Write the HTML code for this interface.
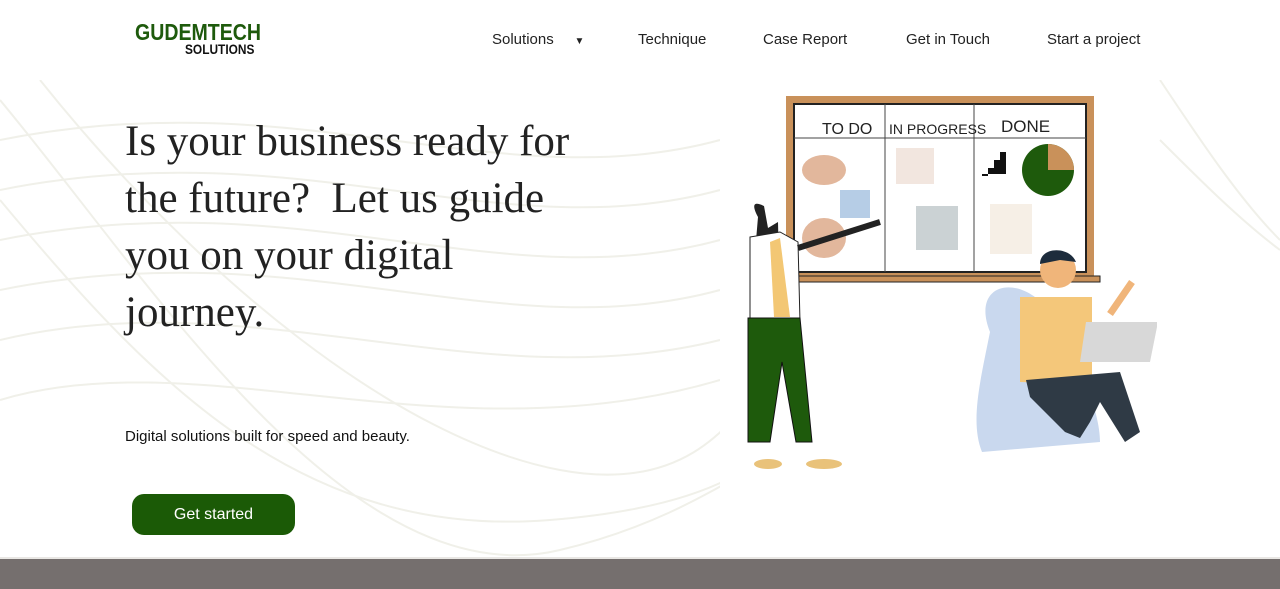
<!DOCTYPE html>
<html><head><meta charset="utf-8"><style>
*{margin:0;padding:0;box-sizing:border-box}
body{width:1280px;height:589px;overflow:hidden;background:#fff;font-family:"Liberation Sans",sans-serif;position:relative}
.logo{position:absolute;left:135px;top:20px;font-family:"Liberation Sans Narrow","Liberation Sans",sans-serif;font-weight:bold}
.logo .a{color:#1e5a0c;font-size:23px;display:block;line-height:24px;transform:scaleX(.85);transform-origin:left}
.logo .b{color:#111;font-size:14px;position:absolute;left:50px;top:21px;white-space:nowrap;transform:scaleX(.85);transform-origin:left}
nav{position:absolute;top:31px;font-size:15px;color:#222}
nav span{position:absolute;white-space:nowrap}
h1{position:absolute;left:125px;top:113px;font-family:"Liberation Serif","DejaVu Serif",serif;font-weight:normal;font-size:43px;line-height:57px;color:#222;white-space:nowrap}
.sub{position:absolute;left:125px;top:428px;font-size:15px;color:#111}
.btn{position:absolute;left:132px;top:494px;width:163px;height:41px;border-radius:12px;background:#1b5a06;color:#fff;font-family:"Liberation Sans Narrow","Liberation Sans",sans-serif;font-size:16px;text-align:center;line-height:41px}
.foot{position:absolute;left:0;top:557px;width:1280px;height:32px;background:#756f6e;border-top:2px solid #e9e7e4}
</style></head><body>
<svg style="position:absolute;left:0;top:80px" width="1280" height="477">
<g fill="none" stroke="#f0f0e9" stroke-width="2">
<path d="M0 60 C300 0 500 120 720 60"/>
<path d="M0 110 C300 50 500 170 720 110"/>
<path d="M0 160 C300 100 500 220 720 160"/>
<path d="M0 210 C300 150 500 270 720 210"/>
<path d="M0 260 C250 200 480 320 720 260"/>
<path d="M0 320 C200 260 450 380 720 300"/>
<path d="M0 20 C150 200 350 520 560 470 S800 300 880 400"/>
<path d="M0 120 C150 300 300 460 550 440 S780 330 850 300"/>
<path d="M40 0 C200 200 400 360 560 390 S750 300 800 260"/>
<path d="M1160 0 C1200 60 1240 120 1280 160"/>
<path d="M1160 60 C1200 100 1240 140 1280 170"/>
</g></svg>
<div style="position:absolute;left:720px;top:82px;width:437px;height:408px;background:#fff"></div>
<svg style="position:absolute;left:720px;top:82px" width="437" height="408">
<rect x="66" y="14" width="308" height="184" fill="#c9915a"/>
<rect x="74" y="22" width="292" height="168" fill="#fff" stroke="#222" stroke-width="2"/>
<rect x="60" y="194" width="320" height="6" fill="#c9915a" stroke="#222"/>
<line x1="165" y1="22" x2="165" y2="190" stroke="#444"/><line x1="254" y1="22" x2="254" y2="190" stroke="#444"/>
<line x1="74" y1="56" x2="366" y2="56" stroke="#444"/>
<text x="102" y="52" font-family="Liberation Sans Narrow,sans-serif" font-size="16" fill="#222">TO DO</text>
<text x="169" y="52" font-family="Liberation Sans Narrow,sans-serif" font-size="14" fill="#222">IN PROGRESS</text>
<text x="281" y="50" font-family="Liberation Sans Narrow,sans-serif" font-size="17" fill="#222">DONE</text>
<ellipse cx="104" cy="88" rx="22" ry="15" fill="#e2b79c"/>
<ellipse cx="104" cy="156" rx="22" ry="20" fill="#e2b79c"/>
<rect x="120" y="108" width="30" height="28" fill="#b6cde6"/>
<rect x="176" y="66" width="38" height="36" fill="#f2e6df"/>
<rect x="196" y="124" width="42" height="44" fill="#cbd2d4"/>
<rect x="270" y="122" width="42" height="50" fill="#f6efe6"/>
<circle cx="328" cy="88" r="26" fill="#1e5a0c"/><path d="M328 62 A26 26 0 0 1 354 88 L328 88Z" fill="#c9915a"/>
<path d="M262 94h6v-8h6v-8h6v-8h6v22h-24z" fill="#111"/>
<path d="M38 135 C30 120 36 120 44 124 L48 146 L58 140 L60 228 L30 230 Z" fill="#222"/>
<path d="M30 155 L60 150 L78 160 L80 240 L30 240 Z" fill="#fff" stroke="#222"/>
<path d="M50 160 L60 156 L70 235 L54 235Z" fill="#f3c774"/>
<path d="M78 166 L160 140" stroke="#222" stroke-width="6"/>
<path d="M28 236 L80 236 L92 360 L76 360 L62 280 L50 360 L28 360Z" fill="#1e5a0c" stroke="#111"/>
<ellipse cx="48" cy="382" rx="14" ry="5" fill="#e9c27a"/><ellipse cx="104" cy="382" rx="18" ry="5" fill="#e9c27a"/>
<path d="M270 250 C250 200 300 190 330 230 C360 280 380 330 380 360 L262 370 C250 340 260 300 270 250Z" fill="#c9d8ee"/>
<circle cx="338" cy="188" r="18" fill="#f0b57a"/><path d="M320 182 C320 164 350 164 356 180 L340 178Z" fill="#1d2c3c"/>
<path d="M300 215 L372 215 L372 302 L300 300 Z" fill="#f4c77a"/>
<path d="M306 298 L400 290 L420 350 L405 360 L380 320 L370 340 L360 356 L345 350 L310 315Z" fill="#2f3a45"/>
<path d="M366 240 L438 240 L430 280 L360 280Z" fill="#d8d8d8"/>
<path d="M390 232 L412 200" stroke="#f0b57a" stroke-width="7"/>
</svg>
<div class="logo"><span class="a">GUDEMTECH</span><span class="b">SOLUTIONS</span></div>
<nav><span style="left:492px">Solutions &nbsp;&nbsp;&nbsp;&nbsp;<span style="font-size:10px;position:static">▼</span></span><span style="left:638px">Technique</span><span style="left:763px">Case Report</span><span style="left:906px">Get in Touch</span><span style="left:1047px">Start a project</span></nav>
<h1>Is your business ready for<br>the future?&nbsp; Let us guide<br>you on your digital<br>journey.</h1>
<div class="sub">Digital solutions built for speed and beauty.</div>
<div class="btn">Get started</div>
<div class="foot"></div>
</body></html>
